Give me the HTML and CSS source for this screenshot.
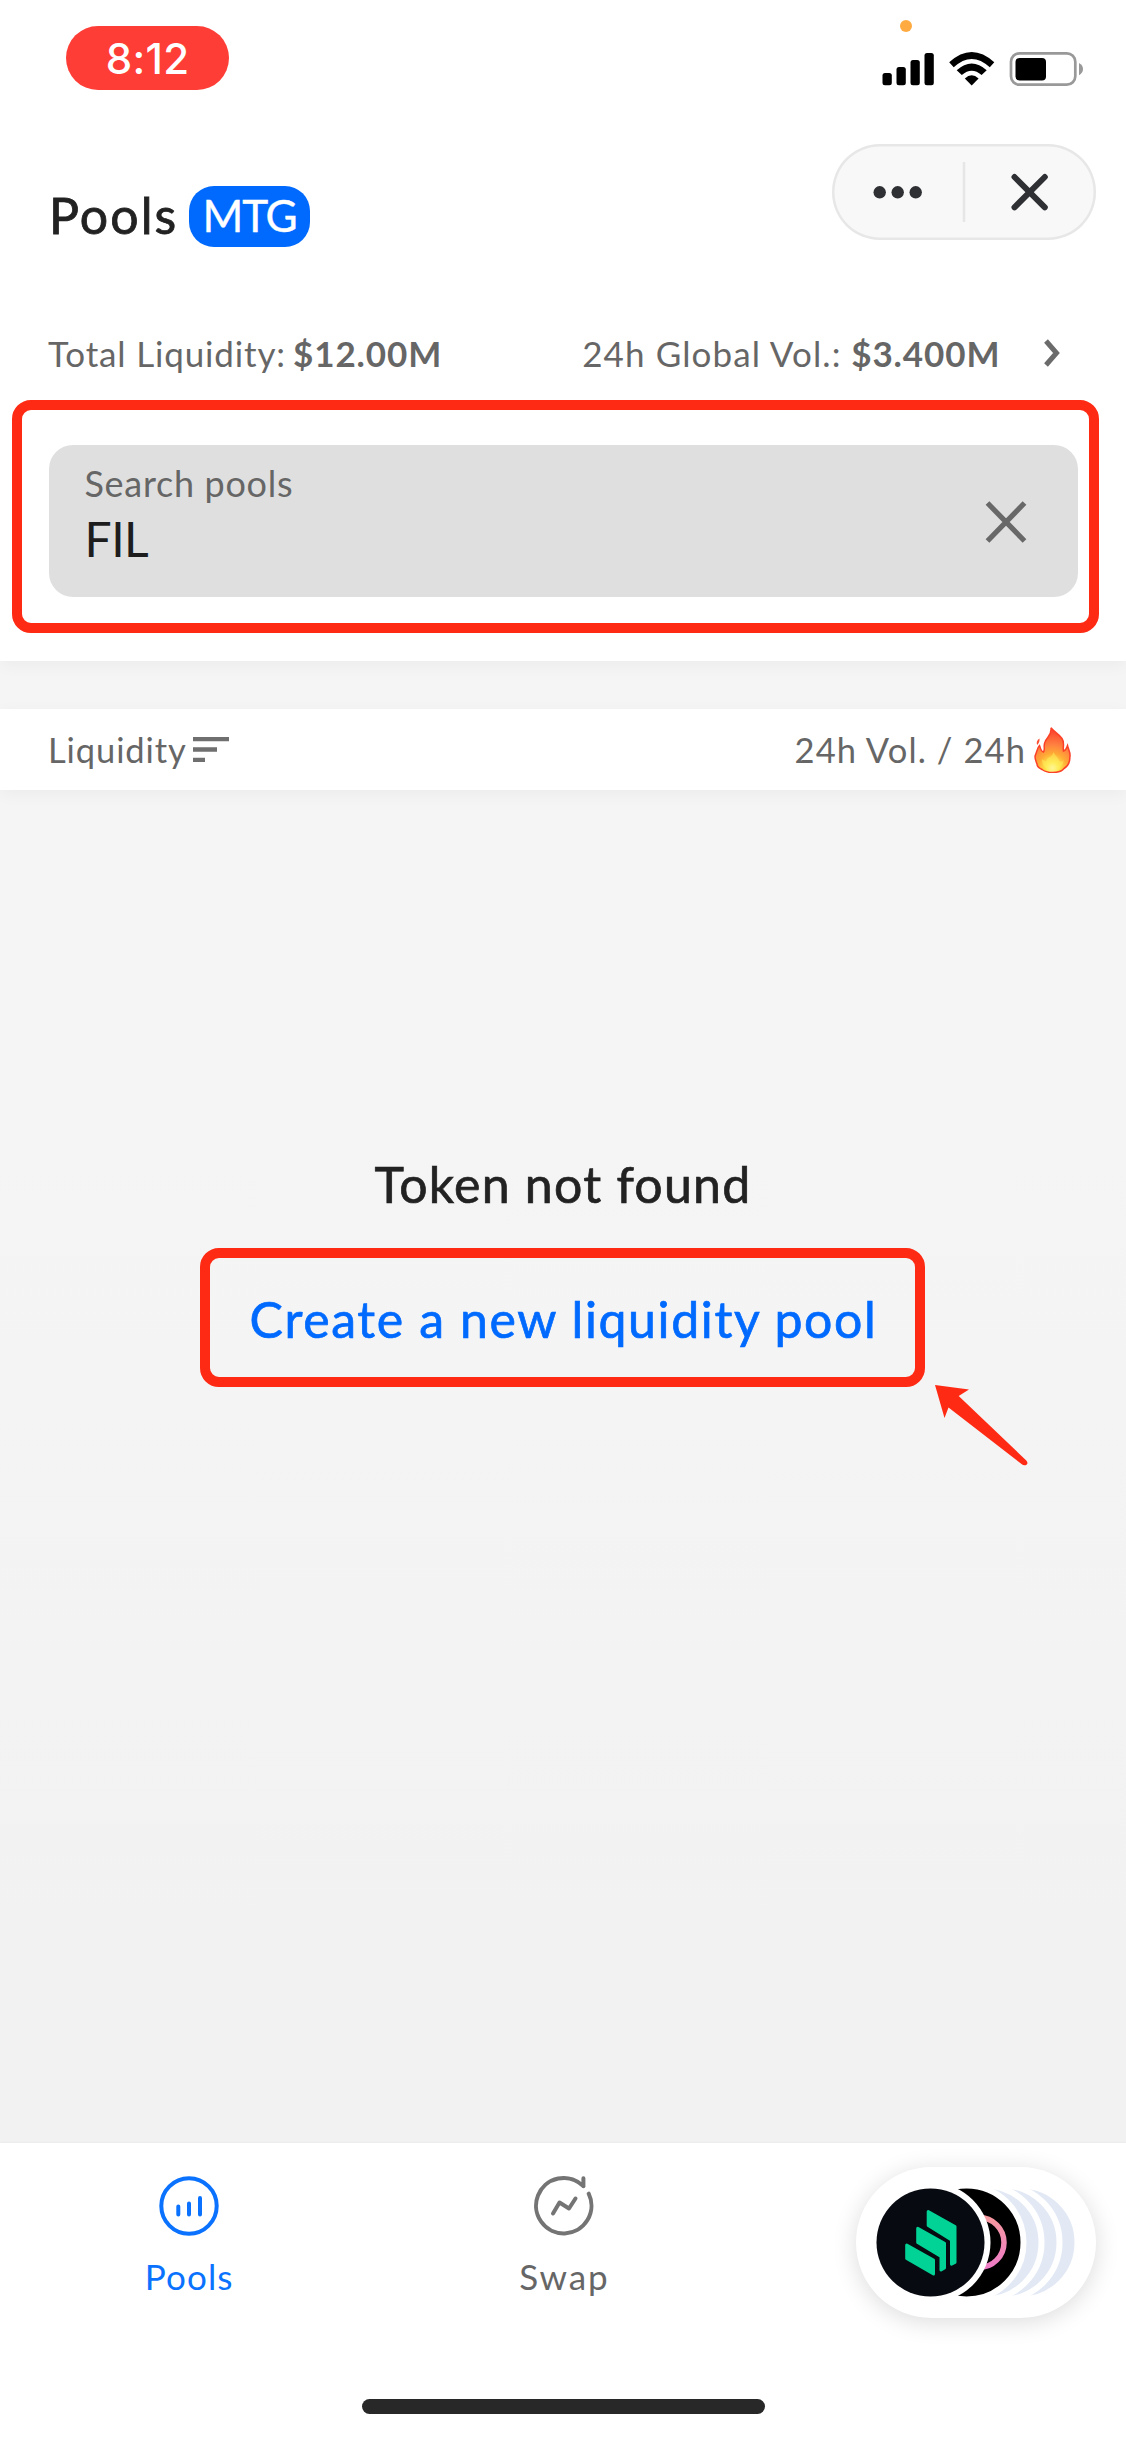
FILE: index.html
```
<!DOCTYPE html>
<html lang="en">
<head>
<meta charset="utf-8">
<title>Pools</title>
<link rel="stylesheet" href="styles.css">
</head>
<body>
<div class="screen">
  <header class="top">
    <div class="status">
      <div class="time">8:12</div>
      <i class="mic"></i>
      <svg class="status-icons" width="206" height="40" viewBox="880 48 206 40">
        <rect x="882.5" y="73" width="9.3" height="12.3" rx="2.5"/>
        <rect x="896.5" y="67" width="9.3" height="18.3" rx="2.5"/>
        <rect x="910.5" y="60" width="9.3" height="25.3" rx="2.5"/>
        <rect x="924.5" y="53" width="9.3" height="32.3" rx="2.5"/>
        <path d="M949.2 62.2Q971.7 41.6 994.3 62.2L989.8 67.3Q971.7 50.5 953.7 67.3Z"/>
        <path d="M956.7 70.2Q971.7 56.6 986.7 70.2L981.6 75.1Q971.7 66.2 961.8 75.1Z"/>
        <path d="M964.8 78.5Q971.7 71.9 978.6 78.5L971.7 85.5Z"/>
        <rect x="1011" y="53.3" width="64.3" height="31.4" rx="8.5" fill="none" stroke="#999" stroke-width="2.7"/>
        <rect x="1015.5" y="58" width="30.5" height="22.5" rx="4"/>
        <path d="M1079 63Q1083 65 1083 69T1079 75.3Z" fill="#999"/>
      </svg>
    </div>
    <div class="title-row">
      <h1 class="title">Pools</h1>
      <span class="badge">MTG</span>
      <div class="capsule">
        <svg width="264" height="96" viewBox="832 144 264 96">
          <g fill="#2e3033"><circle cx="879.7" cy="192.3" r="6.2"/><circle cx="897.7" cy="192.3" r="6.2"/><circle cx="915.7" cy="192.3" r="6.2"/></g>
          <path d="M964 162V222" stroke="#e6e6e6" stroke-width="2.6"/>
          <path d="M1014.5 177L1044.8 207.3M1044.8 177L1014.5 207.3" stroke="#2e3033" stroke-width="6" stroke-linecap="round"/>
        </svg>
      </div>
    </div>
    <div class="stats">
      <span class="stat-label total">Total Liquidity:</span><b class="stat-value">$12.00M</b>
      <span class="stat-label volume">24h Global Vol.:</span><b class="stat-value">$3.400M</b>
      <svg class="chevron" width="18" height="30" viewBox="0 0 18 30"><path d="M3 3L13.5 15L3 27" fill="none" stroke="#6b6b6b" stroke-width="5"/></svg>
    </div>
    <div class="search">
      <div class="field">
        <span class="field-label">Search pools</span>
        <span class="field-value">FIL</span>
      </div>
      <svg width="42" height="42" viewBox="0 0 42 42"><path d="M2.5 2L39.5 40M39.5 2L2.5 40" stroke="#686868" stroke-width="5.2"/></svg>
    </div>
    <div class="mark mark-search"></div>
  </header>

  <div class="list-head">
    <span class="sort">Liquidity</span>
    <svg class="sort-icon" width="36" height="25" viewBox="0 0 36 25"><path d="M0 2.2H36M0 12.5H24M0 22.8H12" stroke="#6f6f6f" stroke-width="4.3"/></svg>
    <span class="day">24h Vol. / 24h</span>
    <svg class="flame" width="37" height="46" viewBox="0 0 37 46">
      <defs>
        <radialGradient id="fire" cx="18.5" cy="41" r="36" gradientUnits="userSpaceOnUse">
          <stop offset="0" stop-color="#fffbd0"/><stop offset=".17" stop-color="#ffe94e"/><stop offset=".4" stop-color="#ffab35"/><stop offset=".65" stop-color="#ff8040"/><stop offset="1" stop-color="#fb4a30"/>
        </radialGradient>
      </defs>
      <path d="M17 .8C18 8 13 10 11 15C9 19 11.5 22 9.500 25C7 25 6.500 21 5.500 18.500C3 21 3 25 1.200 28.500C.5 32 2 34 3 37C3 40 5 41 8 42.500C11 45 15 45.500 18.500 45.500C24 45.500 28 44 30 41.500C34 39 36 35 35.800 30.500C37 26 34.500 23 33.500 18.500C32.500 21 32 23.500 29.500 24C28.500 20 31 16 28 11.500C24.500 6.500 20 5 17 .8Z" fill="url(#fire)" stroke="#fb4128" stroke-width="1.500"/>
      <path d="M5.500 11.500C3 13 2 15.500 3.200 18C5 16 5.800 14 5.500 11.500Z" fill="#fb5034"/>
      <path d="M19.500 25C18 31 14 29 12 34C10 34 8 32 8 32C8 39 13 44 18.500 44C25 44 29 39 29.500 33C28 35 27 35 25.500 34C24 30 21 29 19.500 25Z" fill="#ffef5e" opacity=".5"/>
    </svg>
  </div>

  <main class="empty">
    <p class="empty-title">Token not found</p>
    <a class="create">Create a new liquidity pool</a>
    <svg class="arrow" width="96" height="84" viewBox="933 1384 96 84">
      <path d="M935 1385L969 1389.5L958.7 1396L1026.3 1460.500Q1028.500 1463 1026.500 1464.800Q1024 1466.200 1021.500 1464L948.500 1407.500L944.500 1418Z" fill="#ff2a14"/>
    </svg>
  </main>

  <nav class="tabs">
    <a class="tab active">
      <svg width="60" height="60" viewBox="0 0 60 60" fill="none" stroke="currentColor" stroke-width="4" stroke-linecap="round"><circle cx="30" cy="30" r="27.7"/><path d="M19.3 30.5V38.5M30 27.5V38.5M41 22V38.5"/></svg>
      <span class="pools-label">Pools</span>
    </a>
    <a class="tab">
      <svg width="60" height="60" viewBox="0 0 60 60" fill="none" stroke="currentColor" stroke-width="4" stroke-linecap="round" stroke-linejoin="round"><path d="M49.4 10.2A27.7 27.7 0 1 0 54.7 17.7M49.4 2.2V10.2"/><path d="M19 37.5L25.5 26.5L35 32.5L41.5 22.5"/></svg>
      <span class="swap-label">Swap</span>
    </a>
    <div class="dock">
      <svg width="240" height="151" viewBox="856 2167 240 151">
        <defs><linearGradient id="ring" x1="0" y1="0" x2="0" y2="1"><stop offset="0" stop-color="#f799a0"/><stop offset="1" stop-color="#ee7cc6"/></linearGradient></defs>
        <g fill="#e2e9f5" stroke="#fff" stroke-width="6">
          <circle cx="1020.5" cy="2242.5" r="57"/><circle cx="1002.5" cy="2242.5" r="57"/><circle cx="984.5" cy="2242.5" r="57"/><circle cx="966.5" cy="2242.5" r="57" fill="#000"/>
        </g>
        <circle cx="979" cy="2242.5" r="25" fill="none" stroke="url(#ring)" stroke-width="5.5"/>
        <circle cx="930.5" cy="2242.500" r="60" fill="#fff"/>
        <circle cx="930.5" cy="2242.500" r="54" fill="#070a10"/>
        <g fill="#00d395" stroke="#00d395" stroke-width="3" stroke-linejoin="round">
          <path d="M928.200 2211.500L955 2226.500V2262.500L951.500 2264.200V2240L928.200 2225.500Z"/>
          <path d="M917.700 2228.200L944.500 2243.200V2268L941 2270V2256.500L917.700 2242.500Z"/>
          <path d="M906.700 2245L933.500 2260V2274L906.700 2258.500Z"/>
        </g>
      </svg>
    </div>
    <i class="home"></i>
  </nav>
</div>
</body>
</html>
```
FILE: styles.css
```
* { box-sizing: border-box; }
body { margin: 0; font-family: Lato, "Open Sans", sans-serif; color: #666; background: #fff; }
.screen { width: 1126px; height: 2438px; display: flex; flex-direction: column; overflow: hidden; background: linear-gradient(#f5f5f5 45%, #f2f2f2 80%); }
.screen svg { display: block; flex: none; }
.top { position: relative; height: 661px; background: #fff; box-shadow: 0 4px 16px rgba(0,0,0,.045); }
.status { position: relative; height: 120px; padding: 26px 40px 0 66px; display: flex; justify-content: space-between; align-items: flex-start; }
.time { width: 163px; height: 64px; border-radius: 32px; background: #ff3d37; color: #fff; font: 500 42px/65px Inter, sans-serif; text-align: center; letter-spacing: .3px; }
.mic { position: absolute; left: 899.5px; top: 20px; width: 12px; height: 12px; border-radius: 50%; background: #ffab42; }
.status-icons { margin-top: 22px; }
.title-row { display: flex; height: 170px; padding: 0 30px 0 49px; align-items: flex-start; }
.title { margin: 66px 0 0; width: 140px; font-weight: 400; font-size: 50px; line-height: 59px; letter-spacing: 2.1px; color: #222; -webkit-text-stroke: .8px #222; white-space: nowrap; }
.badge { margin-top: 66px; width: 121px; height: 61px; border-radius: 25px; background: #006aff; color: #fff; font-size: 44px; line-height: 58px; text-align: center; letter-spacing: -1.2px; -webkit-text-stroke: .4px #fff; }
.capsule { margin: 24px 0 0 auto; width: 264px; height: 96px; border-radius: 48px; background: #f8f8f8; box-shadow: inset 0 0 0 2.5px #e7e7e7; }
.stats { display: flex; align-items: center; height: 126px; padding-left: 48px; font-size: 35px; white-space: nowrap; }
.stat-value { letter-spacing: .9px; }
.total { width: 245px; letter-spacing: .85px; }
.volume { margin-left: 140px; width: 269px; letter-spacing: 1.1px; }
.stats .chevron { margin-left: 43px; }
.search { margin: 28.5px 0 0 48.5px; width: 1029px; height: 152.5px; border-radius: 24px; background: #dfdfdf; display: flex; justify-content: space-between; padding: 18px 51px 0 36px; }
.search svg { margin-top: 38px; }
.field { display: flex; flex-direction: column; }
.field-label { font-size: 36px; line-height: 40px; letter-spacing: .7px; }
.field-value { font-size: 48px; line-height: 71px; letter-spacing: -.5px; color: #1d1d1d; }
.mark { position: absolute; border: 10px solid #ff2a14; border-radius: 19px; }
.mark-search { left: 12px; top: 400px; width: 1087px; height: 233px; }
.list-head { margin-top: 48px; height: 81px; display: flex; align-items: center; padding: 0 55px 0 48px; background: #fff; font-size: 34.5px; box-shadow: 0 4px 16px rgba(0,0,0,.045); }
.sort { width: 144.5px; letter-spacing: .9px; }
.day { margin-left: auto; letter-spacing: 1.1px; white-space: nowrap; }
.flame { margin-left: 8px; }
.empty { position: relative; flex: 1; display: flex; flex-direction: column; align-items: center; color: #222; }
.empty-title { margin: 363px 0 33px; font-size: 50px; line-height: 62px; letter-spacing: 1.25px; -webkit-text-stroke: .7px currentColor; }
.create { margin-right: 1px; width: 725px; height: 139px; border: 10px solid #ff2a14; border-radius: 19px; color: #006aff; font-size: 50px; line-height: 122px; text-align: center; text-indent: 2px; letter-spacing: 1.6px; white-space: nowrap; -webkit-text-stroke: .7px currentColor; }
.arrow { position: absolute; left: 933px; top: 594px; }
.tabs { position: relative; height: 295px; display: flex; background: #fff; box-shadow: 0 -1px 2px rgba(0,0,0,.03); }
.tab { width: 375.3px; padding: 33px 0 0 3px; display: flex; flex-direction: column; align-items: center; color: #747474; font-size: 35px; line-height: 42px; }
.tab span { margin-top: 19px; color: #666; letter-spacing: 1.1px; }
.active, .tab.active span { color: #0a72ff; }
.tab .swap-label { letter-spacing: 1.9px; }
.dock { margin: 24px 0 0 105px; width: 240px; height: 151px; border-radius: 76px; background: #fff; box-shadow: 0 4px 24px rgba(0,0,0,.14); }
.home { position: absolute; left: 362px; top: 255.5px; width: 403px; height: 15.5px; border-radius: 8px; background: #282828; }
```
